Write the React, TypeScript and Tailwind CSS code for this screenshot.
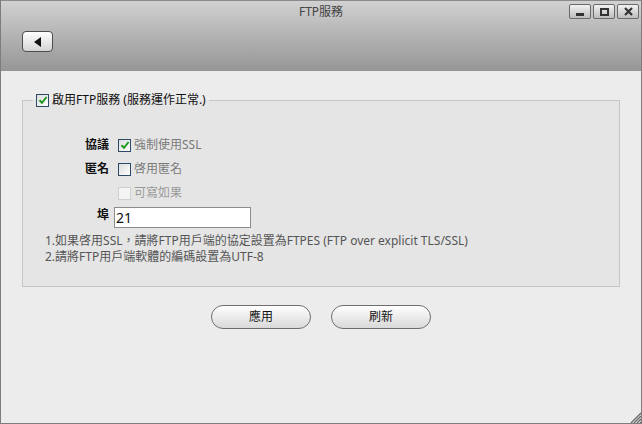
import React from "react";

const font = { fontFamily: '"Noto Sans", "Noto Sans CJK TC", sans-serif' };

function Check({ checked, disabled }: { checked?: boolean; disabled?: boolean }) {
  return (
    <span
      className={
        "inline-flex w-[13px] h-[13px] items-center justify-center border shrink-0 " +
        (disabled
          ? "border-[#cfcfcf] bg-[#f4f4f4]"
          : "border-[#2c4a66] bg-gradient-to-br from-[#dcdcdc] to-[#ffffff]")
      }
    >
      {checked && (
        <svg width="10" height="10" viewBox="0 0 10 10">
          <path d="M1.5 5.2 L4 7.8 L8.6 2" stroke="#1f9a1f" strokeWidth="2" fill="none" />
        </svg>
      )}
    </span>
  );
}

function WinButton({ children }: { children: React.ReactNode }) {
  return (
    <div className="w-[22px] h-[15px] rounded-[2px] border border-[#6b6b6b] bg-gradient-to-b from-[#f2f2f2] to-[#bdbdbd] flex items-center justify-center">
      {children}
    </div>
  );
}

export default function App() {
  return (
    <div
      className="relative w-[642px] h-[424px] bg-[#ececec] border-x border-b border-[#7d7d7d] overflow-hidden text-[12px]"
      style={font}
    >
      {/* title bar */}
      <div className="relative h-[71px] bg-gradient-to-b from-[#d1d1d1] to-[#969696] border-t border-[#8a8a8a]">
        <div className="text-center text-[#444] pt-[3px] leading-[16px]">FTP服務</div>
        <div className="absolute right-[2px] top-[3px] flex gap-[2px]">
          <WinButton>
            <div className="w-[8px] h-[3px] bg-[#333] mt-[5px]" />
          </WinButton>
          <WinButton>
            <div className="w-[9px] h-[8px] border-[2px] border-[#333] border-t-[2px]" />
          </WinButton>
          <WinButton>
            <svg width="9" height="9" viewBox="0 0 9 9">
              <path d="M1 1 L8 8 M8 1 L1 8" stroke="#333" strokeWidth="2.2" />
            </svg>
          </WinButton>
        </div>
        <div className="ml-[21px] mt-[11px] w-[31px] h-[21px] rounded-[4px] border border-[#4d4d4d] bg-gradient-to-b from-[#ffffff] to-[#d4d4d4] flex items-center justify-center">
          <svg width="8" height="10" viewBox="0 0 8 10">
            <path d="M7 0 L7 10 L0 5 Z" fill="#111" />
          </svg>
        </div>
      </div>

      {/* content */}
      <fieldset className="mx-[21px] mt-[22px] border border-[#c6c6c6] bg-[#e5e5e5] pb-[21px]">
        <legend className="ml-[10px] px-[3px] flex items-center gap-[3px] text-[#111] leading-[14px]">
          <Check checked />
          <span>啟用FTP服務 (服務運作正常.)</span>
        </legend>
        <div className="pt-[26px]">
          <div className="flex items-center h-[24px]">
            <div className="w-[86px] text-right font-bold text-[#111]">協議</div>
            <div className="ml-[9px] flex items-center gap-[3px] text-[#7a7a7a]">
              <Check checked />
              <span>強制使用SSL</span>
            </div>
          </div>
          <div className="flex items-center h-[24px]">
            <div className="w-[86px] text-right font-bold text-[#111]">匿名</div>
            <div className="ml-[9px] flex items-center gap-[3px] text-[#7a7a7a]">
              <Check />
              <span>啓用匿名</span>
            </div>
          </div>
          <div className="flex items-center h-[24px]">
            <div className="w-[86px]" />
            <div className="ml-[9px] flex items-center gap-[3px] text-[#9a9a9a]">
              <Check disabled />
              <span>可寫如果</span>
            </div>
          </div>
          <div className="flex items-start mt-[2px]">
            <div className="w-[86px] text-right font-bold text-[#111] leading-[20px] -mt-[2px]">埠</div>
            <div className="ml-[5px] w-[137px] h-[21px] border border-[#8c8c8c] bg-white text-[14px] leading-[19px] pl-[1px] text-[#111]">
              21
            </div>
          </div>
          <div className="mt-[5px] ml-[22px] text-[#555] leading-[16px]">
            <div>1.如果啓用SSL，請將FTP用戶端的協定設置為FTPES (FTP over explicit TLS/SSL)</div>
            <div>2.請將FTP用戶端軟體的編碼設置為UTF-8</div>
          </div>
        </div>
      </fieldset>

      <div className="flex justify-center gap-[20px] mt-[18px]">
        <button className="w-[100px] h-[24px] rounded-full border border-[#6e6e6e] bg-gradient-to-b from-[#ffffff] to-[#d9d9d9] text-[#111]">
          應用
        </button>
        <button className="w-[100px] h-[24px] rounded-full border border-[#6e6e6e] bg-gradient-to-b from-[#ffffff] to-[#d9d9d9] text-[#111]">
          刷新
        </button>
      </div>

      {/* resize grip */}
      <svg className="absolute right-0 bottom-0" width="12" height="12" viewBox="0 0 12 12">
        <path d="M12 2 L2 12 M12 5 L5 12 M12 8 L8 12 M12 11 L11 12" stroke="#666" strokeWidth="1.3" />
      </svg>
    </div>
  );
}
